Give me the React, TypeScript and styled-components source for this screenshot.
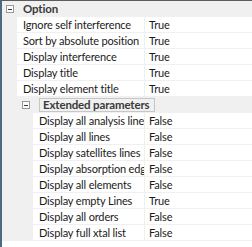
import styled, { createGlobalStyle } from "styled-components";

const GlobalStyle = createGlobalStyle`
  *, *::before, *::after { box-sizing: border-box; }
  html, body { margin: 0; padding: 0; background: #ffffff; }
  body {
    font-family: Lato, "Open Sans", sans-serif;
    font-size: 11px;
    letter-spacing: -0.15px;
    color: #1a1a1a;
  }
`;

const Grid = styled.div`
  width: 252px;
  height: 247px;
  border-top: 1px solid #5c5c5c;
  border-left: 2px solid #4f6a7e;
  background: #ffffff;
  overflow: hidden;
`;

const CategoryRow = styled.div<{ $indent: number }>`
  display: flex;
  align-items: center;
  height: 16px;
  background: #f0f0f0;
  padding-left: ${({ $indent }) => $indent}px;
`;

const Toggle = styled.span`
  width: 8px;
  height: 8px;
  border: 1px solid #9a9a9a;
  background: #fbfbfb;
  display: flex;
  align-items: center;
  justify-content: center;
  margin-right: 9px;
  flex: none;

  &::after {
    content: "";
    width: 4px;
    height: 1px;
    background: #3c3c3c;
  }
`;

const CategoryLabel = styled.span<{ $boxed?: boolean }>`
  font-weight: 700;
  font-size: 11.5px;
  color: #3a3a3a;
  line-height: 12px;
  padding: ${({ $boxed }) => ($boxed ? "0 3px" : "0")};
  border: ${({ $boxed }) => ($boxed ? "1px solid #c6c6c6" : "none")};
  width: ${({ $boxed }) => ($boxed ? "116px" : "auto")};
  white-space: nowrap;
  overflow: hidden;
`;

const PropRow = styled.div<{ $gutter: number }>`
  display: grid;
  grid-template-columns: ${({ $gutter }) => `${$gutter}px ${142 - $gutter}px 1fr`};
  height: 16px;
`;

const Gutter = styled.div`
  background: #f0f0f0;
`;

const NameCell = styled.div`
  padding-left: 6px;
  border-bottom: 1px solid #f0f0f0;
  white-space: nowrap;
  overflow: hidden;
  line-height: 15px;
`;

const ValueCell = styled.div`
  padding-left: 4px;
  border-left: 1px solid #f0f0f0;
  border-bottom: 1px solid #f0f0f0;
  white-space: nowrap;
  overflow: hidden;
  line-height: 15px;
`;

const options: [string, string][] = [
  ["Ignore self interference", "True"],
  ["Sort by absolute position", "True"],
  ["Display interference", "True"],
  ["Display title", "True"],
  ["Display element title", "True"],
];

const extended: [string, string][] = [
  ["Display all analysis line", "False"],
  ["Display all lines", "False"],
  ["Display satellites lines", "False"],
  ["Display absorption edges", "False"],
  ["Display all elements", "False"],
  ["Display empty Lines", "True"],
  ["Display all orders", "False"],
  ["Display full xtal list", "False"],
];

function Property({ name, value, gutter }: { name: string; value: string; gutter: number }) {
  return (
    <PropRow $gutter={gutter}>
      <Gutter />
      <NameCell>{name}</NameCell>
      <ValueCell>{value}</ValueCell>
    </PropRow>
  );
}

export default function App() {
  return (
    <>
      <GlobalStyle />
      <Grid>
        <CategoryRow $indent={4}>
          <Toggle />
          <CategoryLabel>Option</CategoryLabel>
        </CategoryRow>
        {options.map(([n, v]) => (
          <Property key={n} name={n} value={v} gutter={15} />
        ))}
        <CategoryRow $indent={20}>
          <Toggle />
          <CategoryLabel $boxed>Extended parameters</CategoryLabel>
        </CategoryRow>
        {extended.map(([n, v]) => (
          <Property key={n} name={n} value={v} gutter={31} />
        ))}
      </Grid>
    </>
  );
}
